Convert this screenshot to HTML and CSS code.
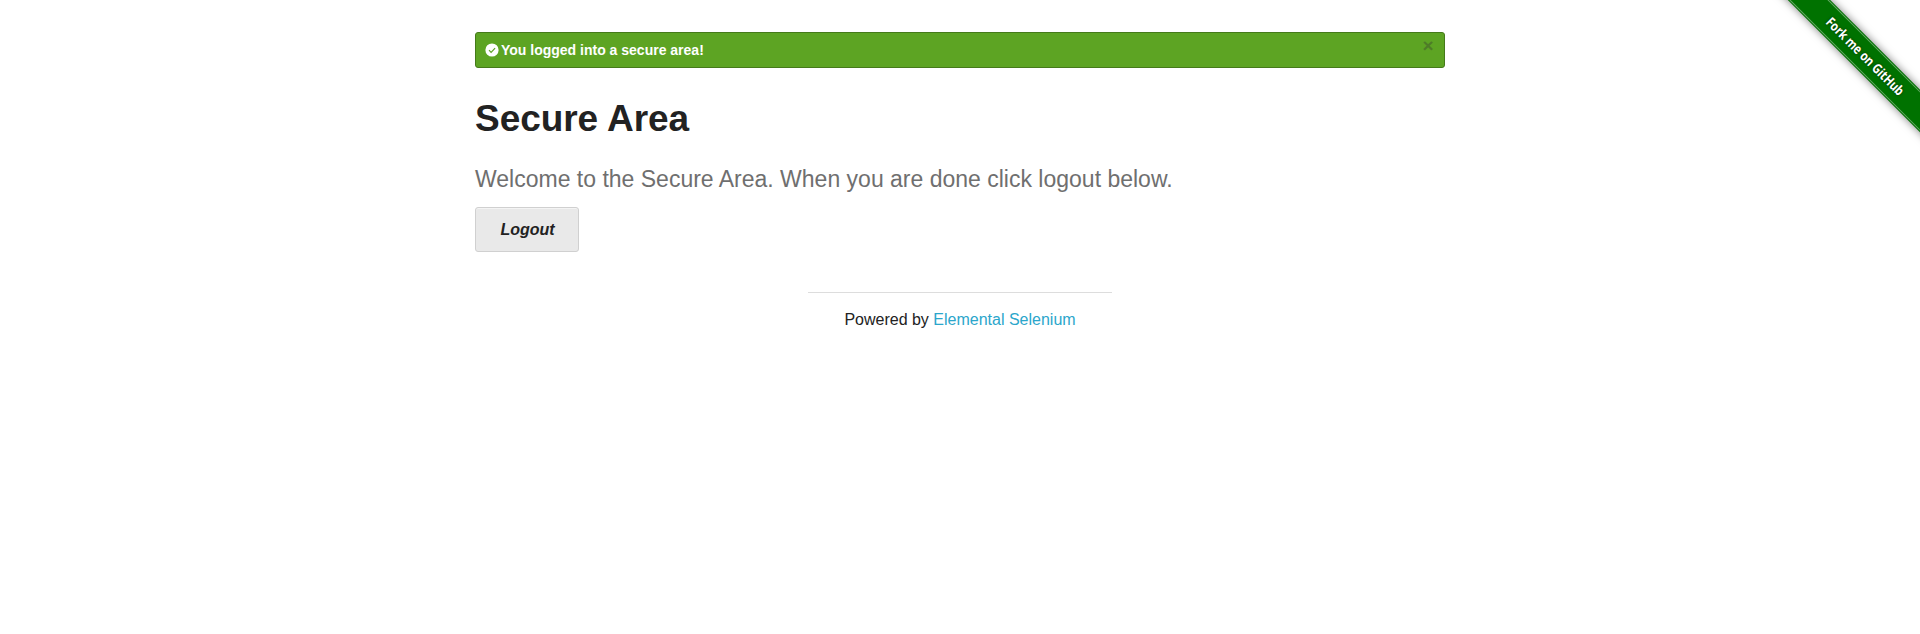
FILE: index.html
```html
<!DOCTYPE html>
<html lang="en">
<head>
<meta charset="utf-8">
<title>Secure Area</title>
<link rel="stylesheet" href="styles.css">
</head>
<body>
<div class="alert"><svg class="check" viewBox="0 0 14 14"><circle cx="7" cy="7" r="6.6" fill="#fff"/><path d="M4 7.2l2.1 2.1 4-4.1" fill="none" stroke="#5da423" stroke-width="1.2"/></svg><span>You logged into a secure area!</span><a class="close">×</a></div>
<div class="ribbon"><div class="band"><span class="ribbon-text">Fork me on GitHub</span></div></div>
<main class="content">
<h2 class="title">Secure Area</h2>
<h4 class="subheader">Welcome to the Secure Area. When you are done click logout below.</h4>
<a class="button">Logout</a>
</main>
<footer class="footer"><hr class="rule"><div>Powered by <a class="link">Elemental Selenium</a></div></footer>
</body>
</html>
```

FILE: styles.css
```css
* { box-sizing: border-box; }
body { margin: 0; padding-top: 32px; min-height: 634px; background: #fff; color: #222; font-family: "Liberation Sans", Arial, sans-serif; overflow: hidden; }
.alert { position: relative; display: flex; align-items: center; width: 970px; height: 36px; margin: 0 auto; padding-left: 8.5px; gap: 2.5px; background: #5da423; border: 1px solid #457a1a; border-radius: 3px; color: #fff; font-size: 14px; font-weight: 700; }
.check { width: 14px; height: 14px; }
.close { position: absolute; right: 10.5px; top: 3px; font-size: 19px; line-height: 20px; color: #333; opacity: .35; }
.content { width: 970px; margin: 0 auto; }
.title { margin: 25px 0 0; font-size: 37px; line-height: 52px; letter-spacing: -.05px; }
.subheader { margin: 18px 0 0; font-size: 23px; line-height: 32px; font-weight: 400; color: #6f6f6f; }
.button { display: block; margin-top: 12px; padding-left: 1px; width: 104px; height: 45px; line-height: 43px; text-align: center; font-size: 16px; font-weight: 700; font-style: italic; background: #e9e9e9; border: 1px solid #d0d0d0; border-radius: 3px; box-shadow: inset 0 1px 0 rgba(255, 255, 255, .5); }
.footer { width: 304px; margin: 40px auto 0; text-align: center; font-size: 16px; line-height: 24px; }
.rule { margin: 0 0 15px; border: 0; border-top: 1px solid #ddd; }
.link { color: #2ba6cb; }
.ribbon { position: absolute; right: 0; top: 0; width: 149px; height: 149px; overflow: hidden; }
.band { position: absolute; left: -26.5px; top: 40.5px; width: 240px; height: 30px; text-align: center; transform: rotate(45deg); background: #007200; color: #fff; font: 700 13.5px/30px "Open Sans", sans-serif; box-shadow: 0 0 9px rgba(0, 0, 0, .5); }
.band::before { content: ""; position: absolute; inset: 1px 0; border-top: 1px solid #66a866; border-bottom: 1px solid #66a866; }
.ribbon-text { display: inline-block; transform: scaleX(.82); text-shadow: 0 0 3px rgba(0, 0, 0, .6); }
```
